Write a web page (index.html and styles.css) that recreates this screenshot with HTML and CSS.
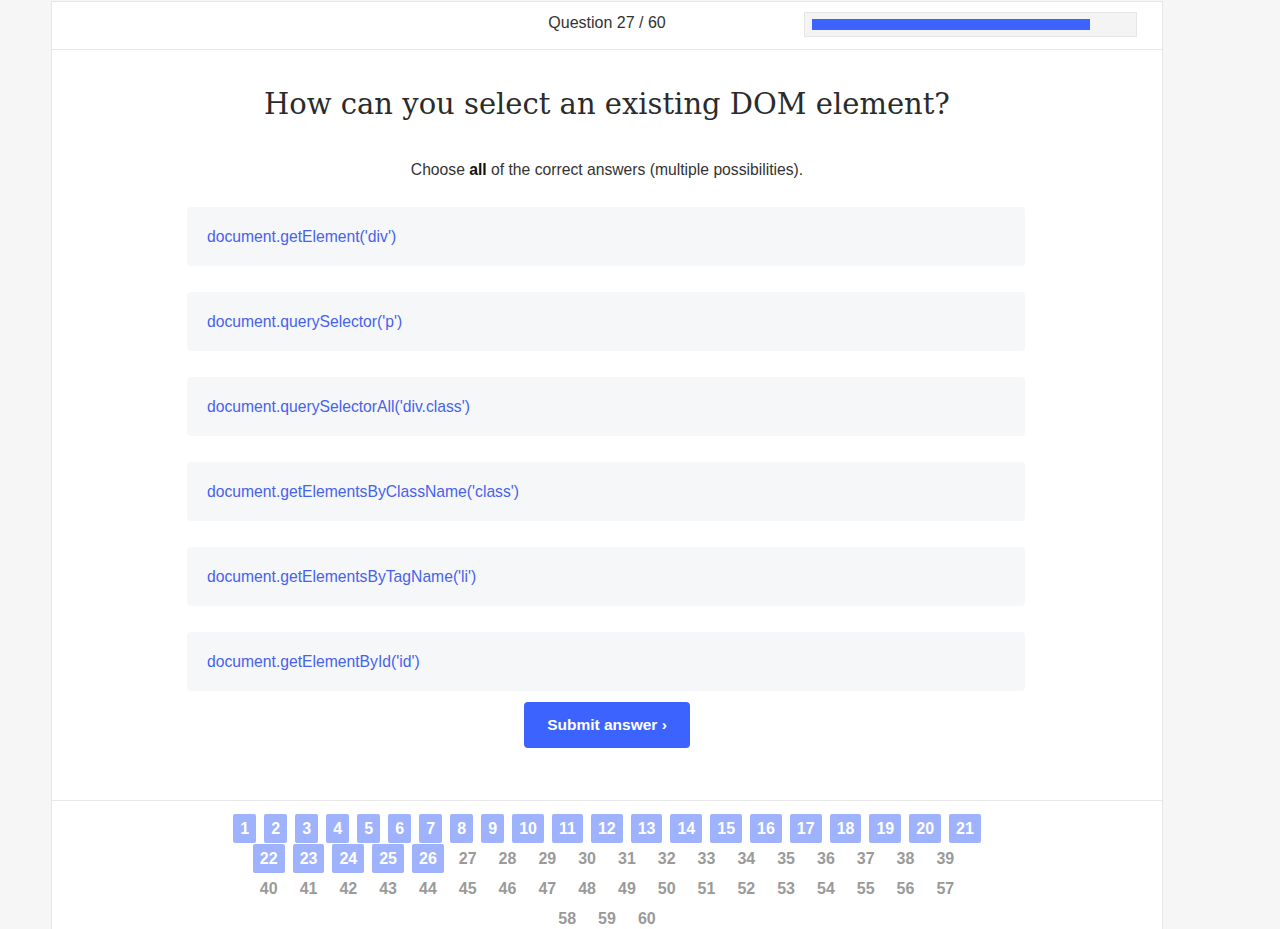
FILE: index.html
```html
<!DOCTYPE html>
<html lang="en">
<head>
<meta charset="utf-8">
<title>Quiz</title>
<link rel="stylesheet" href="styles.css">
</head>
<body>
<div class="page">
  <div class="card">
    <header class="topbar">
      <div class="spacer"></div>
      <div class="counter">Question 27 / 60</div>
      <div class="progress-wrap">
        <div class="progress"><div class="progress-fill" style="width: 87.7%"></div></div>
      </div>
    </header>
    <main class="question">
      <h1 class="title">How can you select an existing DOM element?</h1>
      <p class="hint">Choose <b>all</b> of the correct answers (multiple possibilities).</p>
      <ul class="answers">
        <li class="answer">document.getElement('div')</li>
        <li class="answer">document.querySelector('p')</li>
        <li class="answer">document.querySelectorAll('div.class')</li>
        <li class="answer">document.getElementsByClassName('class')</li>
        <li class="answer">document.getElementsByTagName('li')</li>
        <li class="answer">document.getElementById('id')</li>
      </ul>
      <button class="submit">Submit answer ›</button>
    </main>
    <nav class="pager">
      <div class="pager-row">
        <span class="pg done">1</span><span class="pg done">2</span><span class="pg done">3</span><span class="pg done">4</span><span class="pg done">5</span><span class="pg done">6</span><span class="pg done">7</span><span class="pg done">8</span><span class="pg done">9</span><span class="pg done">10</span><span class="pg done">11</span><span class="pg done">12</span><span class="pg done">13</span><span class="pg done">14</span><span class="pg done">15</span><span class="pg done">16</span><span class="pg done">17</span><span class="pg done">18</span><span class="pg done">19</span><span class="pg done">20</span><span class="pg done">21</span>
      </div>
      <div class="pager-row">
        <span class="pg done">22</span><span class="pg done">23</span><span class="pg done">24</span><span class="pg done">25</span><span class="pg done">26</span><span class="pg">27</span><span class="pg">28</span><span class="pg">29</span><span class="pg">30</span><span class="pg">31</span><span class="pg">32</span><span class="pg">33</span><span class="pg">34</span><span class="pg">35</span><span class="pg">36</span><span class="pg">37</span><span class="pg">38</span><span class="pg">39</span>
      </div>
      <div class="pager-row">
        <span class="pg">40</span><span class="pg">41</span><span class="pg">42</span><span class="pg">43</span><span class="pg">44</span><span class="pg">45</span><span class="pg">46</span><span class="pg">47</span><span class="pg">48</span><span class="pg">49</span><span class="pg">50</span><span class="pg">51</span><span class="pg">52</span><span class="pg">53</span><span class="pg">54</span><span class="pg">55</span><span class="pg">56</span><span class="pg">57</span>
      </div>
      <div class="pager-row">
        <span class="pg">58</span><span class="pg">59</span><span class="pg">60</span>
      </div>
    </nav>
  </div>
</div>
</body>
</html>
```
FILE: styles.css
```css
* { box-sizing: border-box; }
html, body { margin: 0; padding: 0; }
body {
  background: #f6f6f6;
  font-family: "Liberation Sans", Arial, sans-serif;
  color: #333;
}
.page {
  padding-top: 1px;
  padding-left: 51px;
}
.card {
  width: 1112px;
  background: #fff;
  border: 1px solid #e6e6e6;
  border-bottom: none;
  min-height: 940px;
}
.topbar {
  display: grid;
  grid-template-columns: 1fr auto 1fr;
  align-items: center;
  height: 48px;
  border-bottom: 1px solid #e8e8e8;
}
.counter {
  font-size: 16px;
  color: #333;
  padding-bottom: 5px;
}
.progress-wrap {
  display: flex;
  justify-content: flex-end;
  padding-right: 25px;
}
.progress {
  width: 333px;
  height: 25px;
  background: #f4f4f4;
  border: 1px solid #e6e6e6;
  padding: 6px 7px;
  margin-bottom: 2px;
}
.progress-fill {
  height: 11px;
  background: #3d63fe;
}
.question {
  display: flex;
  flex-direction: column;
  align-items: center;
  padding: 34px 0 52px;
  border-bottom: 1px solid #e8e8e8;
}
.title {
  margin: 0;
  font-family: "DejaVu Serif", Georgia, serif;
  font-weight: normal;
  font-size: 29px;
  line-height: 40px;
  color: #2b2b2b;
}
.hint {
  margin: 36px 0 0;
  font-size: 15.7px;
  line-height: 20px;
  color: #333;
}
.hint b { color: #111; }
.answers {
  list-style: none;
  margin: 27px 2px 0 0;
  padding: 0;
  width: 838px;
  display: flex;
  flex-direction: column;
  gap: 26px;
}
.answer {
  height: 59px;
  background: #f6f7f9;
  border-radius: 4px;
  padding: 0 20px;
  display: flex;
  align-items: center;
  font-size: 15.7px;
  color: #4762ec;
}
.submit {
  margin-top: 11px;
  width: 166px;
  height: 46px;
  border: none;
  border-radius: 4px;
  background: #3d63fe;
  color: #fff;
  font-family: "Liberation Sans", Arial, sans-serif;
  font-weight: bold;
  font-size: 15.5px;
}
.pager {
  padding-top: 13px;
  display: flex;
  flex-direction: column;
  align-items: center;
}
.pager-row {
  display: flex;
  justify-content: center;
  gap: 8px;
}
.pg {
  height: 30px;
  min-width: 23px;
  padding: 0 7px;
  display: flex;
  align-items: center;
  justify-content: center;
  font-size: 16px;
  font-weight: bold;
  color: #9a9a9a;
}
.pg.done {
  height: 29px;
  margin-bottom: 1px;
  background: #9fb2fd;
  color: #fff;
  border-radius: 2px;
}
```
